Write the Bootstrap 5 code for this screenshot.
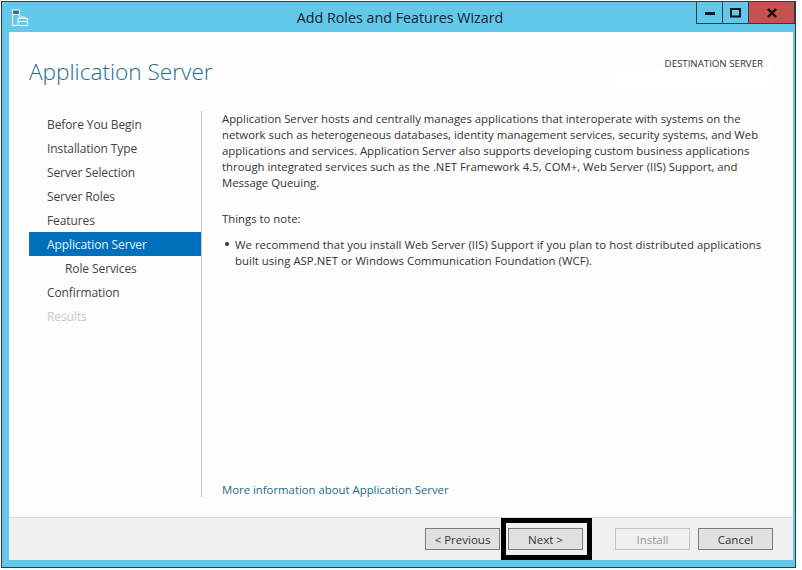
<!DOCTYPE html>
<html lang="en">
<head>
<meta charset="utf-8">
<title>Add Roles and Features Wizard</title>
<link href="https://cdn.jsdelivr.net/npm/bootstrap@5.3.0/dist/css/bootstrap.min.css" rel="stylesheet">
<style>
html,body{height:100%;background:#fff;overflow:hidden}
body{font-family:"Open Sans","Liberation Sans",sans-serif;font-size:11.5px;color:#333;padding:1px 6px 2px 1px;width:802px;height:570px}
.win{width:795px;height:567px;background:#63c8ea;border:1px solid #2a3d48;display:flex;flex-direction:column}
.tbar{height:30px;flex:none;padding-left:9px}
.tbar-icon{margin-top:7px;flex:none}
.tbar-title{flex:1;text-align:center;font-size:14.3px;color:#14242c;padding-top:6px;padding-left:75px;line-height:19px}
.tbtns{height:22px;border:1px solid #2a3d48;border-top:0}
.tbtn{width:26px;display:flex;align-items:center;justify-content:center;border-right:1px solid #2a3d48}
.tbtn-x{width:45px;background:#c75050;border-right:0}
.tbody-wrap{flex:1;margin:0 2px 7px 7px;background:#fdfdfd;display:flex;flex-direction:column;min-height:0}
.wtop{height:79px;padding:24px 30px 0 20px;flex:none}
.wtitle{font-size:22.6px;font-weight:300;color:#236d8e;line-height:32px;margin:0}
.dest{font-size:9.7px;color:#333;line-height:12px;margin-top:2px;text-align:right;position:relative;z-index:1}
.dest-patch{height:21px;width:156px;background:#fff;margin:-3px -9px 0 0}
.wmain{flex:1;min-height:0;padding-left:20px}
.side{width:172px;flex:none;padding-top:1px}
.side .step{height:24px;line-height:26px;padding-left:18px;color:#444;font-size:12px;letter-spacing:-.1px}
.side .step.on{background:#0070bd;color:#e8f4fb}
.side .step.sub{padding-left:36px}
.side .step.off{color:#c6c6c6}
.rule{width:1px;background:#c9c9c9;margin-bottom:20px;flex:none}
.cnt{padding:0 30px 0 20px;flex:1;line-height:16px;font-size:11.35px;color:#333;display:flex;flex-direction:column;padding-bottom:19px}
.cnt p{margin:0}
.cnt p.bul{margin-top:10px;padding-left:13px;position:relative;letter-spacing:.04px}
.bul::before{content:"";position:absolute;left:3px;top:5px;width:4px;height:4px;border-radius:50%;background:#333}
.more{margin-top:auto;color:#256b87;text-decoration:none}
.wfoot{height:43px;flex:none;background:#f0f0f0;border-top:1px solid #dcdcdc;padding-right:20px}
.wbtn{width:75px;height:22px;border:1px solid #7a7a7a;border-radius:0;background:#e1e1e1;color:#333;font-size:11.5px;padding:0;line-height:19px;font-family:inherit}
.wbtn:disabled{background:#f0f0f0;border-color:#c4c4c4;color:#9a9a9a;opacity:1}
.hilite{width:91px;height:42px;border:5px solid #000;padding-left:2px;margin:0 23px 0 1px;flex:none;display:flex;align-items:center}
.gap8{margin-left:8px}
</style>
</head>
<body>
<div class="win">
  <div class="tbar d-flex">
    <svg width="18" height="19" viewBox="0 0 18 19" class="tbar-icon" fill="none" stroke="#fff" stroke-width="1"><rect x="1.5" y="1" width="7" height="4.5" fill="#2b6fa6"/><rect x="1.5" y="5.5" width="7" height="11" /><rect x="7" y="9.5" width="9.5" height="7" fill="#63c8ea"/><path d="M10 9.5V8h3.5v1.5M7 12.5h9.5"/></svg>
    <div class="tbar-title">Add Roles and Features Wizard</div>
    <div class="tbtns d-flex">
      <div class="tbtn"><svg width="10" height="4" viewBox="0 0 10 4"><rect width="10" height="3" y="1" fill="#07151c"/></svg></div>
      <div class="tbtn"><svg width="11" height="10" viewBox="0 0 11 10" fill="none"><rect x="1" y="1" width="9" height="7.5" stroke="#07151c" stroke-width="2"/></svg></div>
      <div class="tbtn tbtn-x"><svg width="10" height="10" viewBox="0 0 10 10"><path d="M1 1l8 8M9 1l-8 8" stroke="#140a0a" stroke-width="2.4"/></svg></div>
    </div>
  </div>
  <div class="tbody-wrap">
    <div class="wtop d-flex justify-content-between">
      <h1 class="wtitle">Application Server</h1>
      <div class="d-flex flex-column align-items-end">
        <div class="dest">DESTINATION SERVER</div>
        <div class="dest-patch"></div>
      </div>
    </div>
    <div class="wmain d-flex">
      <div class="side">
        <div class="step">Before You Begin</div>
        <div class="step">Installation Type</div>
        <div class="step">Server Selection</div>
        <div class="step">Server Roles</div>
        <div class="step">Features</div>
        <div class="step on">Application Server</div>
        <div class="step sub">Role Services</div>
        <div class="step">Confirmation</div>
        <div class="step off">Results</div>
      </div>
      <div class="rule"></div>
      <div class="cnt">
        <p>Application Server hosts and centrally manages applications that interoperate with systems on the network such as heterogeneous databases, identity management services, security systems, and Web applications and services. Application Server also supports developing custom business applications through integrated services such as the .NET Framework 4.5, COM+, Web Server (IIS) Support, and Message Queuing.</p>
        <p class="mt-3 pt-1">Things to note:</p>
        <p class="bul">We recommend that you install Web Server (IIS) Support if you plan to host distributed applications built using ASP.NET or Windows Communication Foundation (WCF).</p>
        <a class="more" href="#">More information about Application Server</a>
      </div>
    </div>
    <div class="wfoot d-flex justify-content-end align-items-center">
      <button class="wbtn" type="button">&lt; Previous</button>
      <div class="hilite"><button class="wbtn" type="button">Next &gt;</button></div>
      <button class="wbtn" type="button" disabled>Install</button>
      <button class="wbtn gap8" type="button">Cancel</button>
    </div>
  </div>
</div>
<script src="https://cdn.jsdelivr.net/npm/bootstrap@5.3.0/dist/js/bootstrap.bundle.min.js"></script>
</body>
</html>
